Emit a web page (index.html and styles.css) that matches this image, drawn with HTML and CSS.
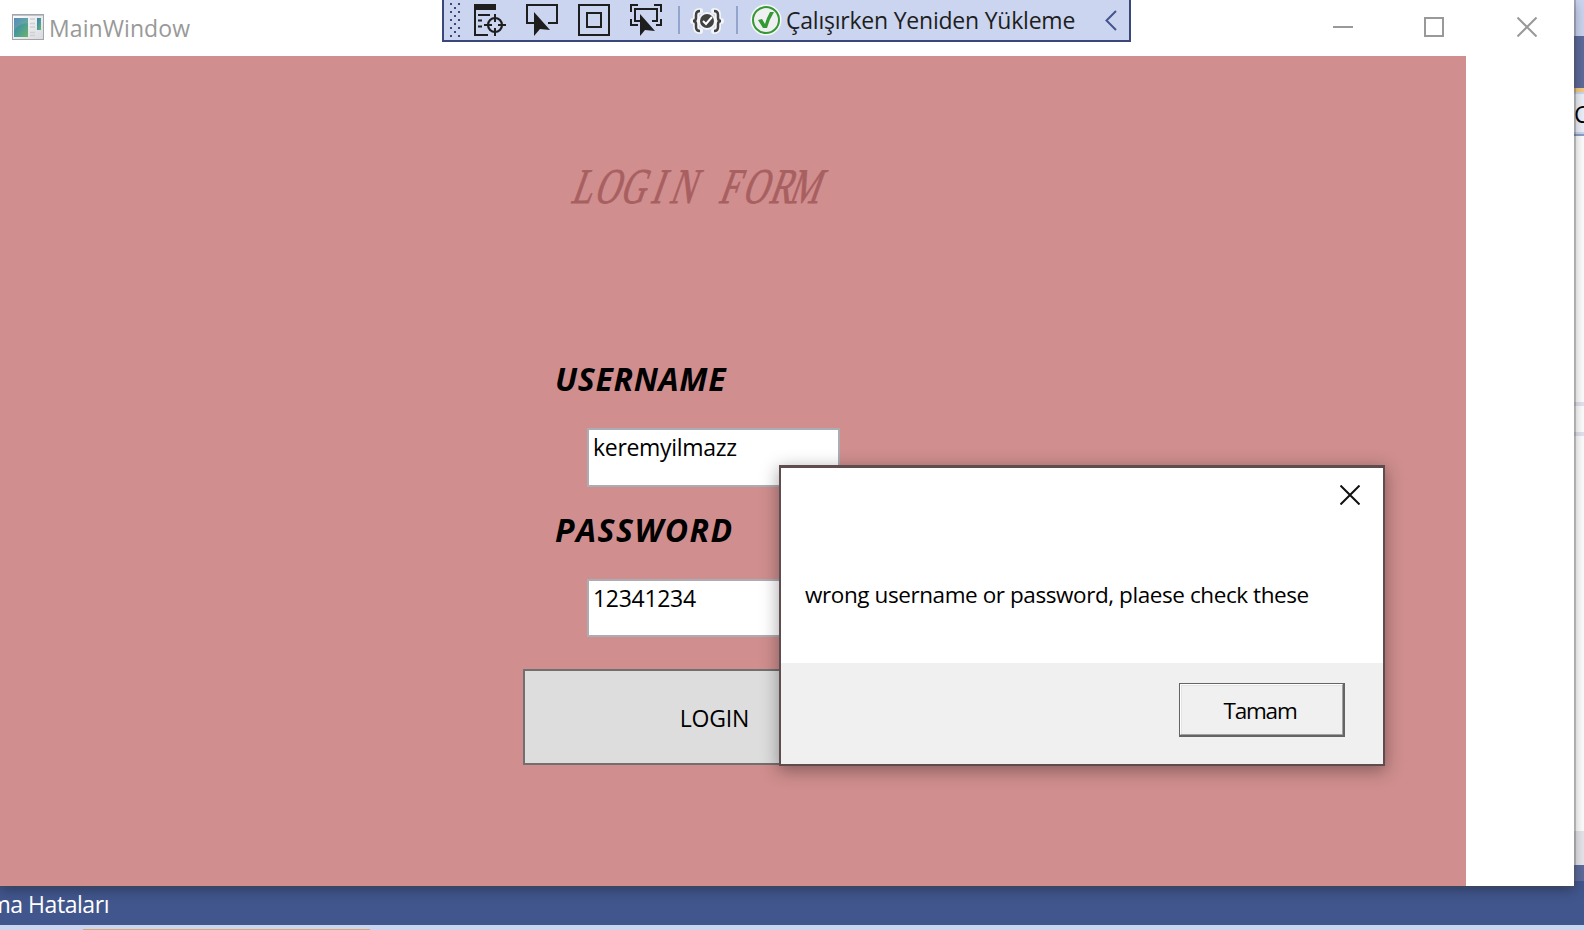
FILE: index.html
```
<!DOCTYPE html>
<html lang="tr">
<head>
<meta charset="utf-8">
<title>MainWindow</title>
<link rel="stylesheet" href="styles.css">
</head>
<body>
<div class="desktop">
  <div class="ide-side">
    <div class="ide-top"></div>
    <div class="ide-band"></div>
    <div class="ide-tab"><span>C</span></div>
    <div class="ide-doc"><i></i><i></i></div>
    <div class="ide-scroll"></div>
    <div class="ide-edge"></div>
  </div>
  <div class="ide-bottom">
    <div class="ide-status"><span class="t-status">ma Hataları</span></div>
    <div class="ide-strip"><div class="ide-accent"></div></div>
  </div>

  <main class="window">
    <header class="titlebar">
      <svg class="app-icon" width="32" height="26" viewBox="0 0 32 26">
        <defs>
          <linearGradient id="g" x1="0" y1="0" x2="1" y2="1"><stop offset="0" stop-color="#4379b4"/><stop offset=".5" stop-color="#4a9a98"/><stop offset="1" stop-color="#69b56b"/></linearGradient>
          <linearGradient id="f" x1="0" y1="0" x2="1" y2="1"><stop offset="0" stop-color="#fdfdfd"/><stop offset="1" stop-color="#d9dade"/></linearGradient>
        </defs>
        <rect x=".5" y=".5" width="31" height="25" fill="url(#f)" stroke="#a3a5ad"/>
        <path d="M1 1.500h30" stroke="#c0c2c8"/>
        <rect x="2" y="4" width="14" height="19" fill="url(#g)"/>
        <path d="M2 17Q5 10 16 9V4H2z" fill="#fff" opacity=".12"/>
        <path d="M18 5h5M18 9.500h5M18 13h5M18 18.500h5M18 21.500h5" stroke="#cfd0d4" stroke-width="1.500"/>
        <rect x="25" y="4" width="4" height="12" fill="url(#g)"/>
      </svg>
      <span class="t-title">MainWindow</span>
      <div class="caption">
        <svg width="20" height="20" viewBox="0 0 20 20"><path d="M0 10h20"/></svg>
        <svg width="20" height="20" viewBox="0 0 20 20"><path d="M1 1h18v18H1z"/></svg>
        <svg width="20" height="20" viewBox="0 0 20 20"><path d="M.5.5l19 19M19.500.5l-19 19"/></svg>
      </div>
    </header>

    <section class="form">
      <svg class="heading" width="270" height="60" viewBox="0 0 270 60">
        <g transform="translate(0 47) scale(.68 1) skewX(-27.5)">
          <text x="0 34 72 117 145 190 217 252 291 320" y="0">LOGIN FORM</text>
        </g>
      </svg>
      <div class="label user">USERNAME</div>
      <div class="field first"><span class="t-user">keremyilmazz</span></div>
      <div class="label pass">PASSWORD</div>
      <div class="field second"><span class="t-pass">12341234</span></div>
      <div class="login"><span class="t-login">LOGIN</span></div>
    </section>
  </main>

  <div class="toolbar">
    <svg width="689" height="42" viewBox="0 0 689 42">
      <g fill="#3b4779">
        <path d="M8 3h2v2h-2zM16 3h2v2h-2zM12 7h2v2h-2zM8 11h2v2h-2zM16 11h2v2h-2zM12 15h2v2h-2zM8 19h2v2h-2zM16 19h2v2h-2zM12 23h2v2h-2zM8 27h2v2h-2zM16 27h2v2h-2zM12 31h2v2h-2zM8 35h2v2h-2zM16 35h2v2h-2z"/>
      </g>
      <g fill="none" stroke="#1e1e1e" stroke-width="2">
        <path d="M33 4v31h13M36 15h12M36 20.500h4M36 26.500h4"/>
        <circle cx="53" cy="25" r="7" stroke-width="2.200"/>
        <path d="M53 14v8M53 28v8M42 25h8M56 25h8"/>
        <path d="M92 23h-7V5h30v18h-9"/>
        <path d="M137 5h30v30h-30zM145 13h14v14h-14z"/>
        <path d="M189 12V5h7M212 5h7v7M219 19v6h-5M189 19v6h7M199 21h-6V9h22v12h-5"/>
      </g>
      <path fill="#1e1e1e" d="M32 4h22v6H32zM92 12v24l6-7 10 1zM198 14v22l5-6 10 1z"/>
      <path d="M237 6v28M295 6v28" stroke="#93a5cd" stroke-width="2"/>
      <g fill="none" stroke="#f4f5f9" stroke-width="6" stroke-linejoin="round" stroke-linecap="round"><path d="M258 11q-4 0-4 4v3q0 3-3 3q3 0 3 3v3q0 4 4 4M272 11q4 0 4 4v3q0 3 3 3q-3 0-3 3v3q0 4-4 4"/><circle cx="265" cy="21" r="6"/></g>
      <path fill="none" stroke="#414141" stroke-width="2.500" d="M258 11q-4 0-4 4v3q0 3-3 3q3 0 3 3v3q0 4 4 4M272 11q4 0 4 4v3q0 3 3 3q-3 0-3 3v3q0 4-4 4"/>
      <circle cx="265" cy="21" r="7" fill="#414141"/>
      <path d="M261 21l3 3 6-7" fill="none" stroke="#fff" stroke-width="2"/>
      <circle cx="324" cy="20" r="15.500" fill="#f7f7f9"/>
      <circle cx="324" cy="20" r="13" fill="#f0eff1" stroke="#339933" stroke-width="2"/>
      <path d="M316 20l4-1 3 5q2-7 5-12h4q-5 8-7 16h-4z" fill="#339933"/>
      <path d="M674 11l-9.500 9.500L674 30" fill="none" stroke="#46548c" stroke-width="2"/>
    </svg>
    <span class="t-reload">Çalışırken Yeniden Yükleme</span>
  </div>

  <div class="dialog">
    <div class="dialog-body">
      <svg class="dialog-close" width="20" height="20" viewBox="0 0 20 20"><path d="M.5.5l19 19M19.500.5l-19 19"/></svg>
      <span class="t-msg">wrong username or password, plaese check these</span>
    </div>
    <div class="dialog-foot">
      <div class="ok"><div class="ok-in"><span class="t-ok">Tamam</span></div></div>
    </div>
  </div>
</div>
</body>
</html>
```
FILE: styles.css
```
* { box-sizing: border-box; }
body { margin: 0; overflow: hidden; font-family: "Open Sans", "Noto Sans", sans-serif; font-size: 23px; line-height: 32px; color: #000; }
span { white-space: pre; }
svg { display: block; flex: none; }
.desktop { position: relative; width: 1584px; height: 930px; overflow: hidden; background: #41568d; }

.ide-side { position: absolute; left: 1574px; top: 0; width: 10px; height: 881px; display: flex; flex-direction: column; }
.ide-top { height: 36px; background: #cbd5f0; }
.ide-band { height: 52px; background: #5d6b9c; }
.ide-tab { height: 48px; border-top: 4px solid #f5cc84; border-bottom: 2px solid #8d9fcb; background: #eef1f9; box-shadow: inset 0 2px #cbd8f1, inset 0 -2px #cbd8f1; overflow: hidden; }
.ide-tab span { display: block; margin-top: 6px; }
.ide-doc { flex: 1; background: #fff; padding-top: 266px; }
.ide-doc i { display: block; height: 4px; margin-bottom: 26px; background: #e4e5f0; }
.ide-scroll { height: 34px; background: #e6e6ec; }
.ide-edge { height: 16px; background: #5d6b9c; }

.ide-bottom { position: absolute; left: 0; top: 881px; width: 1584px; }
.ide-status { height: 44px; width: 109px; padding-top: 7px; display: flex; justify-content: flex-end; color: #fff; }
.t-status { letter-spacing: -.45px; }
.ide-strip { height: 5px; padding: 4px 0 0 83px; background: #cbd5f0; }
.ide-accent { width: 287px; height: 1px; background: #cfa976; }

.window { position: absolute; left: 0; top: 0; width: 1574px; height: 886px; background: #fff; box-shadow: 0 0 0 2px rgba(80,80,80,.3), 0 3px 12px 0 rgba(0,0,0,.36); }
.titlebar { height: 56px; display: flex; align-items: flex-start; padding: 14px 28px 0 12px; color: #999; }
.t-title { margin: -2px 0 0 5px; letter-spacing: .08px; }
.caption { margin: 3px 0 0 auto; display: flex; gap: 72px; fill: none; stroke: #999; stroke-width: 2; padding-right: 9px; }
.caption svg:nth-child(2) { margin: 0 1px 0 -1px; }
.form { width: 1466px; height: 830px; background: #d08e8e; display: flex; flex-direction: column; align-items: flex-start; padding: 100px 0 0 523px; }
.heading { margin-left: 47px; overflow: visible; }
.heading text { font: 50px "Liberation Serif", serif; fill: #a85f60; stroke: #a85f60; stroke-width: .8; }
.label { font-size: 32px; font-weight: 700; font-style: italic; line-height: 40px; margin-left: 32px; white-space: nowrap; }
.user { margin-top: 143px; letter-spacing: .7px; }
.pass { margin-top: 23px; letter-spacing: 1.5px; }
.field { width: 253px; margin-left: 64px; border: 2px solid #abadb3; background: #fff; padding: 1px 4px; }
.t-user { letter-spacing: -.3px; }
.t-pass { letter-spacing: -.3px; }
.first { height: 59px; margin-top: 29px; }
.second { height: 58px; margin-top: 29px; }
.login { width: 385px; height: 96px; margin-top: 32px; border: 2px solid #707070; background: #ddd; display: flex; justify-content: center; padding: 31px 2px 0 0; }
.t-login { letter-spacing: -.2px; }

.toolbar { position: absolute; left: 442px; top: 0; width: 689px; height: 42px; background: #cbd5f0; color: #1e1e1e; display: flex; box-shadow: inset 2px -2px #3b4779, inset -2px 0 #3b4779; }
.t-reload { margin: 4px 0 0 -345px; letter-spacing: -.22px; }

.dialog { position: absolute; left: 779px; top: 465px; width: 606px; height: 301px; border: 2px solid #5f4c4f; border-top-width: 3px; background: #fff; box-shadow: 0 4px 16px 1px rgba(0,0,0,.34); display: flex; flex-direction: column; }
.dialog-body { flex: 1; display: flex; flex-direction: column; padding: 17px 23px 0 24px; }
.dialog-close { align-self: flex-end; fill: none; stroke: #111; stroke-width: 2; }
.t-msg { margin-top: 74px; font-size: 22.5px; letter-spacing: -.42px; }
.dialog-foot { height: 101px; background: #f0f0f0; padding: 20px 38px 0; display: flex; justify-content: flex-end; }
.ok { width: 166px; height: 54px; border: solid #646464; border-width: 1px 2px 2px 1px; }
.ok-in { height: 51px; border: solid; border-width: 1px; border-color: #fff #a0a0a0 #a0a0a0 #fff; box-shadow: inset 1px 1px #e3e3e3; display: flex; justify-content: center; padding: 10px 3px 0 0; }
.t-ok { font-size: 22.5px; letter-spacing: -1.2px; }
```
